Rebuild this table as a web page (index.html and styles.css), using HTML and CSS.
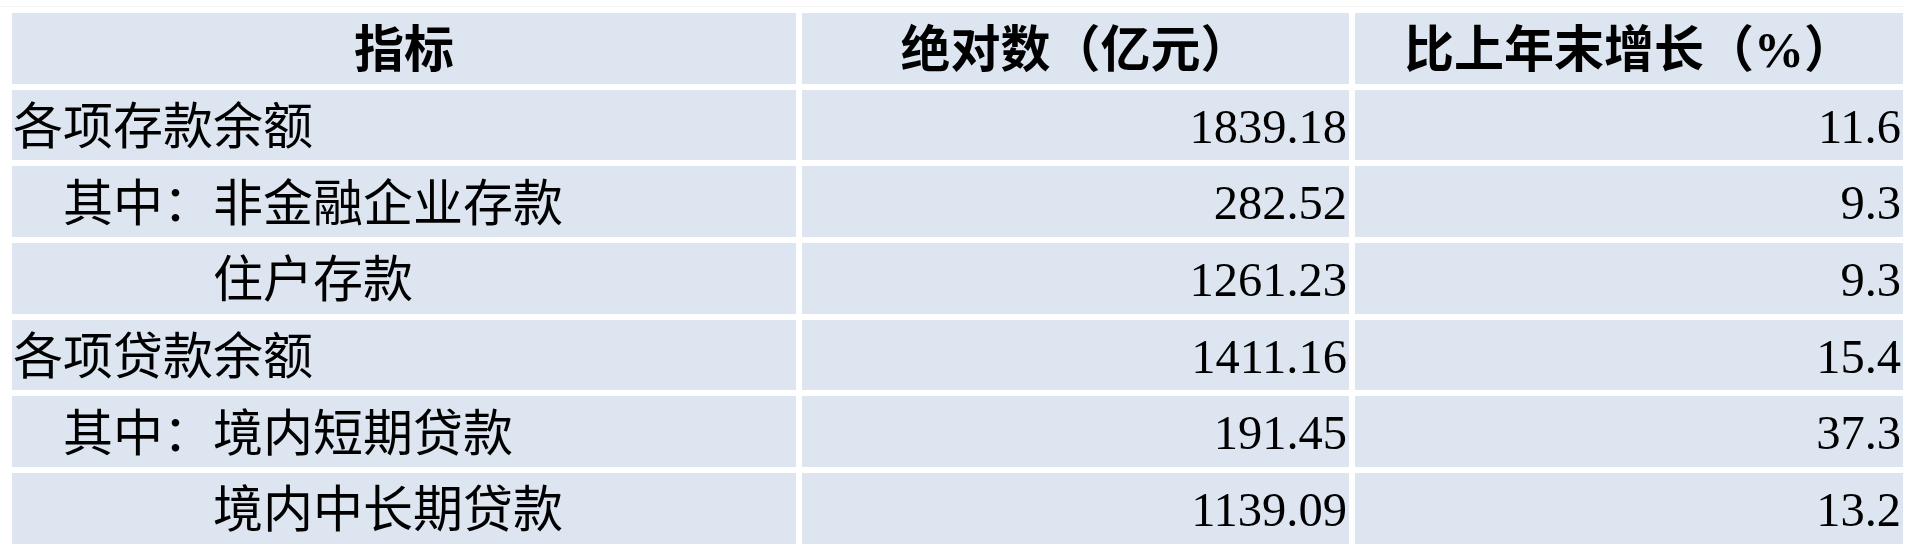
FILE: index.html
```html
<!DOCTYPE html>
<html lang="zh-CN">
<head>
<meta charset="utf-8">
<title>金融指标</title>
<link rel="stylesheet" href="styles.css">
</head>
<body>
<div class="rule"></div>
<div class="table">
  <div class="cell head">指标</div>
  <div class="cell head">绝对数（亿元）</div>
  <div class="cell head">比上年末增长（%）</div>

  <div class="cell label">各项存款余额</div>
  <div class="cell num">1839.18</div>
  <div class="cell num">11.6</div>

  <div class="cell label">　其中：非金融企业存款</div>
  <div class="cell num">282.52</div>
  <div class="cell num">9.3</div>

  <div class="cell label">　　　　住户存款</div>
  <div class="cell num">1261.23</div>
  <div class="cell num">9.3</div>

  <div class="cell label">各项贷款余额</div>
  <div class="cell num">1411.16</div>
  <div class="cell num">15.4</div>

  <div class="cell label">　其中：境内短期贷款</div>
  <div class="cell num">191.45</div>
  <div class="cell num">37.3</div>

  <div class="cell label">　　　　境内中长期贷款</div>
  <div class="cell num">1139.09</div>
  <div class="cell num">13.2</div>
</div>
</body>
</html>
```
FILE: styles.css
```css
html, body {
  margin: 0;
  padding: 0;
  background: #ffffff;
  overflow: hidden;
}

body {
  font-family: "Liberation Serif", "Noto Sans CJK SC", serif;
  color: #000000;
  padding-top: 6px;
}

.rule {
  width: 1905px;
  height: 1px;
  background: #f3f3f3;
  margin-bottom: 6px;
}

.table {
  display: grid;
  grid-template-columns: 784px 547px 548px;
  grid-auto-rows: 70.67px;
  gap: 6px;
  margin-left: 12px;
}

.cell {
  background: #dce5f0;
  display: flex;
  align-items: center;
  font-size: 50px;
  line-height: 1;
  white-space: pre;
  padding-top: 4px;
  box-sizing: border-box;
}

.head {
  justify-content: center;
  font-weight: bold;
}

.label {
  padding-left: 1px;
}

.num {
  justify-content: flex-end;
  padding-right: 2px;
  font-size: 48.5px;
}
```
